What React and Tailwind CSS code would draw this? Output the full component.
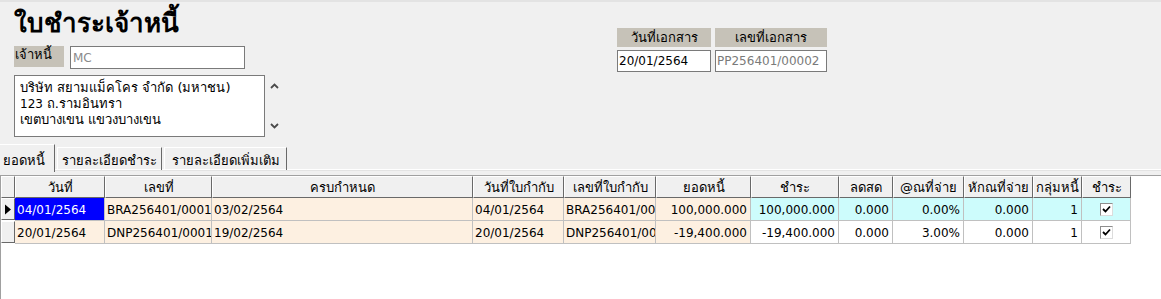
import React from 'react';

const font = { fontFamily: 'Tahoma, "DejaVu Sans", sans-serif' };

const columns = [
  { title: '', w: 14 },
  { title: 'วันที่', w: 90 },
  { title: 'เลขที่', w: 107 },
  { title: 'ครบกำหนด', w: 261 },
  { title: 'วันที่ใบกำกับ', w: 91 },
  { title: 'เลขที่ใบกำกับ', w: 92 },
  { title: 'ยอดหนี้', w: 95 },
  { title: 'ชำระ', w: 88 },
  { title: 'ลดสด', w: 54 },
  { title: '@ณที่จ่าย', w: 71 },
  { title: 'หักณที่จ่าย', w: 69 },
  { title: 'กลุ่มหนี้', w: 49 },
  { title: 'ชำระ', w: 49 },
];

const rows = [
  {
    current: true,
    cells: ['04/01/2564', 'BRA256401/0001', '03/02/2564', '04/01/2564', 'BRA256401/0001', '100,000.000', '100,000.000', '0.000', '0.00%', '0.000', '1'],
  },
  {
    current: false,
    cells: ['20/01/2564', 'DNP256401/0001', '19/02/2564', '20/01/2564', 'DNP256401/0001', '-19,400.000', '-19,400.000', '0.000', '3.00%', '0.000', '1'],
  },
];

const Checkbox = () => (
  <div className="w-[13px] h-[13px] bg-white border border-[#8e8e8e] border-r-[#dcdcdc] border-b-[#dcdcdc] flex items-center justify-center">
    <svg width="9" height="9" viewBox="0 0 9 9">
      <path d="M1 4 L3.5 6.5 L8 1.5" fill="none" stroke="#000" strokeWidth="1.8" />
    </svg>
  </div>
);

const HeaderCell = ({ w, children }) => (
  <div
    className="h-[22px] shrink-0 bg-[#f0f0f0] border-t border-l border-white border-r border-b border-r-[#696969] border-b-[#696969] flex items-center justify-center text-[13px] text-black leading-none"
    style={{ width: w }}
  >
    {children}
  </div>
);

export default function App() {
  return (
    <div className="w-[1161px] h-[299px] bg-[#f0f0f0] border-t-2 border-[#e3e3e3] overflow-hidden text-black" style={font}>
      <div className="flex">
        <div className="w-[617px] pl-[14px]">
          <h1 className="h-[42px] pt-[3px] text-[26px] font-bold leading-[36px]">ใบชำระเจ้าหนี้</h1>
          <div className="flex items-start mt-[2px]">
            <div className="w-[50px] h-[21px] bg-[#c6c2b8] text-[13px] pl-[1px] pt-[2px] leading-none">เจ้าหนี้</div>
            <div className="ml-[6px] w-[175px] h-[23px] bg-white border border-[#7a7a7a] text-[12px] text-[#8a8a8a] pl-[2px] flex items-center">MC</div>
          </div>
          <div className="flex mt-[6px]">
            <div className="w-[251px] h-[62px] bg-white border border-[#7a7a7a] text-[13px] leading-[16px] pl-[5px] pt-[4px]">
              <div>บริษัท สยามแม็คโคร จำกัด (มหาชน)</div>
              <div><span className="text-[12px]">123 </span>ถ.รามอินทรา</div>
              <div>เขตบางเขน แขวงบางเขน</div>
            </div>
            <div className="ml-[5px] h-[62px] flex flex-col justify-between py-[8px]">
              <svg width="9" height="6" viewBox="0 0 9 6">
                <path d="M1 5 L4.5 1.5 L8 5" fill="none" stroke="#4a4a4a" strokeWidth="1.8" />
              </svg>
              <svg width="9" height="6" viewBox="0 0 9 6">
                <path d="M1 1 L4.5 4.5 L8 1" fill="none" stroke="#4a4a4a" strokeWidth="1.8" />
              </svg>
            </div>
          </div>
        </div>
        <div className="flex gap-[4px] pt-[26px]">
          <div className="w-[94px]">
            <div className="h-[19px] bg-[#c6c2b8] text-[13px] flex items-center justify-center">วันที่เอกสาร</div>
            <div className="mt-[3px] h-[22px] bg-white border border-[#7a7a7a] text-[12px] flex items-center pl-[1px]">20/01/2564</div>
          </div>
          <div className="w-[112px]">
            <div className="h-[19px] bg-[#c6c2b8] text-[13px] flex items-center justify-center">เลขที่เอกสาร</div>
            <div className="mt-[3px] h-[22px] bg-white border border-[#7a7a7a] text-[12px] text-[#7a7a7a] flex items-center pl-[1px] overflow-hidden whitespace-nowrap">PP256401/00002</div>
          </div>
        </div>
      </div>

      <div className="mt-[7px] relative h-[28px]">
        <div className="absolute left-0 right-0 top-[25px] h-[2px] border-t border-white border-b border-b-[#e3e3e3]" />
        <div className="flex items-end h-[28px] relative">
          <div className="w-[55px] h-[28px] bg-[#f0f0f0] border-t border-white border-r border-r-[#696969] text-[13px] pl-[3px] pt-[9px] leading-none relative z-10">ยอดหนี้</div>
          <div className="ml-[2px] w-[105px] h-[23px] border-t border-l border-white border-r border-r-[#696969] text-[13px] flex items-center justify-center mb-[2px] pt-[3px]">รายละเอียดชำระ</div>
          <div className="ml-[2px] w-[123px] h-[23px] border-t border-l border-white border-r border-r-[#696969] text-[13px] flex items-center justify-center mb-[2px] pt-[3px]">รายละเอียดเพิ่มเติม</div>
        </div>
      </div>

      <div className="mt-[3px] h-[200px] bg-white border-l border-t border-[#a0a0a0]">
        <div className="flex">
          {columns.map((c, i) => (
            <HeaderCell key={i} w={c.w}>{c.title}</HeaderCell>
          ))}
        </div>
        {rows.map((r, ri) => (
          <div key={ri} className="flex h-[23px]">
            <HeaderCell w={14}>
              {r.current && (
                <svg width="8" height="11" viewBox="0 0 8 11">
                  <path d="M1 0.5 L7 5.5 L1 10.5 Z" fill="#000" />
                </svg>
              )}
            </HeaderCell>
            {r.cells.map((v, ci) => {
              const col = columns[ci + 1];
              const numeric = ci >= 5;
              let bg = 'bg-[#fdf0e1]';
              if (ci >= 6) bg = r.current ? 'bg-[#cdfcfc]' : 'bg-white';
              if (ci === 0 && r.current) bg = 'bg-[#0000ff] text-white';
              return (
                <div
                  key={ci}
                  className={`${bg} h-[23px] shrink-0 overflow-hidden whitespace-nowrap border-r border-b border-[#c0c0c0] text-[12px] flex items-center pt-[2px] ${numeric ? 'justify-end pr-[3px]' : 'pl-[2px]'}`}
                  style={{ width: col.w }}
                >
                  {v}
                </div>
              );
            })}
            <div
              className={`${r.current ? 'bg-[#cdfcfc]' : 'bg-white'} h-[23px] w-[49px] shrink-0 border-r border-b border-[#c0c0c0] flex items-center justify-center`}
            >
              <Checkbox />
            </div>
          </div>
        ))}
      </div>
    </div>
  );
}
